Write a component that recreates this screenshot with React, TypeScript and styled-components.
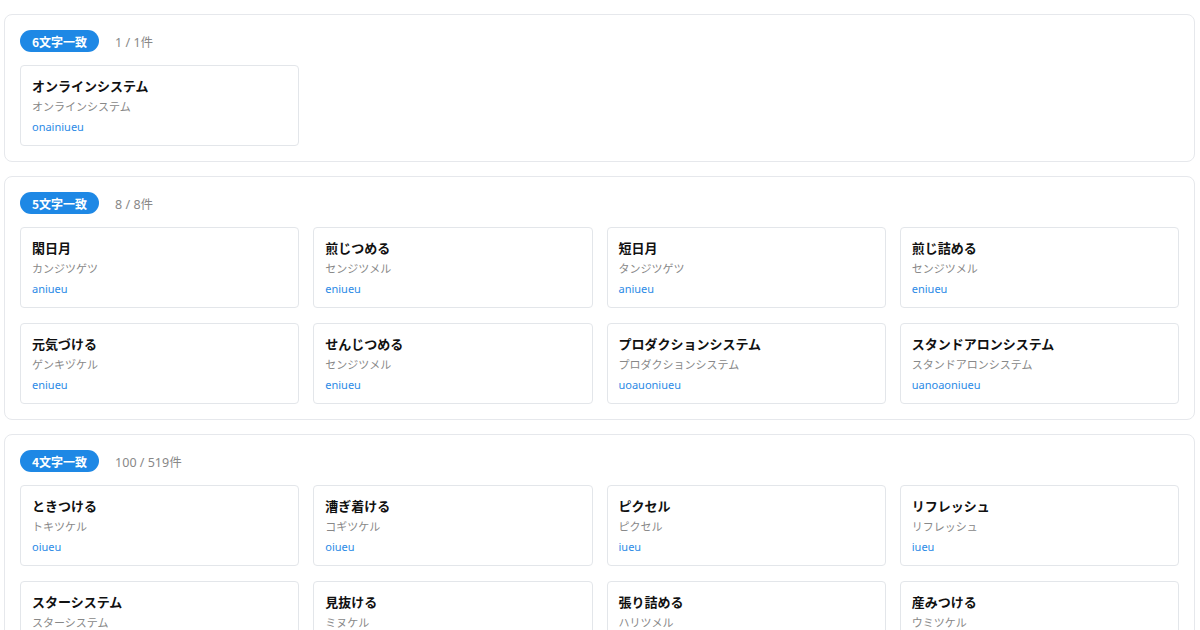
import React from "react";
import styled, { createGlobalStyle } from "styled-components";

const Global = createGlobalStyle`
  html, body { margin: 0; padding: 0; background: #fff; }
  body { font-family: "Noto Sans", "Noto Sans CJK JP", sans-serif; color: #111; }
`;

const Page = styled.div`
  display: flex;
  flex-direction: column;
  gap: 14px;
  padding: 14px 5px 14px 4px;
`;

const Section = styled.section`
  border: 1px solid #e6e8ec;
  border-radius: 8px;
  padding: 15px 15px 15px 15px;
  display: flex;
  flex-direction: column;
  gap: 13px;
`;

const Header = styled.div`
  display: flex;
  align-items: center;
  gap: 16px;
  height: 22px;
`;

const Badge = styled.span`
  display: inline-flex;
  align-items: center;
  height: 22px;
  padding: 0 12px;
  border-radius: 11px;
  background: #1e88e5;
  color: #fff;
  font-size: 12px;
  font-weight: 700;
  font-family: "Noto Sans CJK JP", sans-serif;
`;

const Count = styled.span`
  font-size: 12.5px;
  color: #888;
  font-family: "Noto Sans", "Noto Sans CJK JP", sans-serif;
`;

const Grid = styled.div`
  display: grid;
  grid-template-columns: repeat(4, 1fr);
  column-gap: 14px;
  row-gap: 15px;
`;

const Card = styled.div`
  border: 1px solid #e3e6ea;
  border-radius: 4px;
  padding: 10px 11px 11px 11px;
  display: flex;
  flex-direction: column;
  height: 81px;
  box-sizing: border-box;
`;

const Title = styled.div`
  font-size: 13px;
  font-weight: 700;
  color: #111;
  line-height: 20px;
  font-family: "Noto Sans CJK JP", sans-serif;
`;

const Reading = styled.div`
  font-size: 11px;
  color: #888;
  line-height: 21px;
  font-family: "Noto Sans CJK JP", sans-serif;
`;

const Roman = styled.div`
  font-size: 11px;
  color: #2b8ae6;
  line-height: 20px;
  font-family: "Noto Sans", sans-serif;
`;

type Item = [string, string, string];
type Group = { label: string; count: string; items: Item[] };

const groups: Group[] = [
  {
    label: "6文字一致",
    count: "1 / 1件",
    items: [["オンラインシステム", "オンラインシステム", "onainiueu"]],
  },
  {
    label: "5文字一致",
    count: "8 / 8件",
    items: [
      ["閑日月", "カンジツゲツ", "aniueu"],
      ["煎じつめる", "センジツメル", "eniueu"],
      ["短日月", "タンジツゲツ", "aniueu"],
      ["煎じ詰める", "センジツメル", "eniueu"],
      ["元気づける", "ゲンキヅケル", "eniueu"],
      ["せんじつめる", "センジツメル", "eniueu"],
      ["プロダクションシステム", "プロダクションシステム", "uoauoniueu"],
      ["スタンドアロンシステム", "スタンドアロンシステム", "uanoaoniueu"],
    ],
  },
  {
    label: "4文字一致",
    count: "100 / 519件",
    items: [
      ["ときつける", "トキツケル", "oiueu"],
      ["漕ぎ着ける", "コギツケル", "oiueu"],
      ["ピクセル", "ピクセル", "iueu"],
      ["リフレッシュ", "リフレッシュ", "iueu"],
      ["スターシステム", "スターシステム", "uaiueu"],
      ["見抜ける", "ミヌケル", "iueu"],
      ["張り詰める", "ハリツメル", "aiueu"],
      ["産みつける", "ウミツケル", "uiueu"],
    ],
  },
];

export default function App() {
  return (
    <>
      <Global />
      <Page>
        {groups.map((g) => (
          <Section key={g.label}>
            <Header>
              <Badge>{g.label}</Badge>
              <Count>{g.count}</Count>
            </Header>
            <Grid>
              {g.items.map(([t, r, ro], i) => (
                <Card key={i}>
                  <Title>{t}</Title>
                  <Reading>{r}</Reading>
                  <Roman>{ro}</Roman>
                </Card>
              ))}
            </Grid>
          </Section>
        ))}
      </Page>
    </>
  );
}
